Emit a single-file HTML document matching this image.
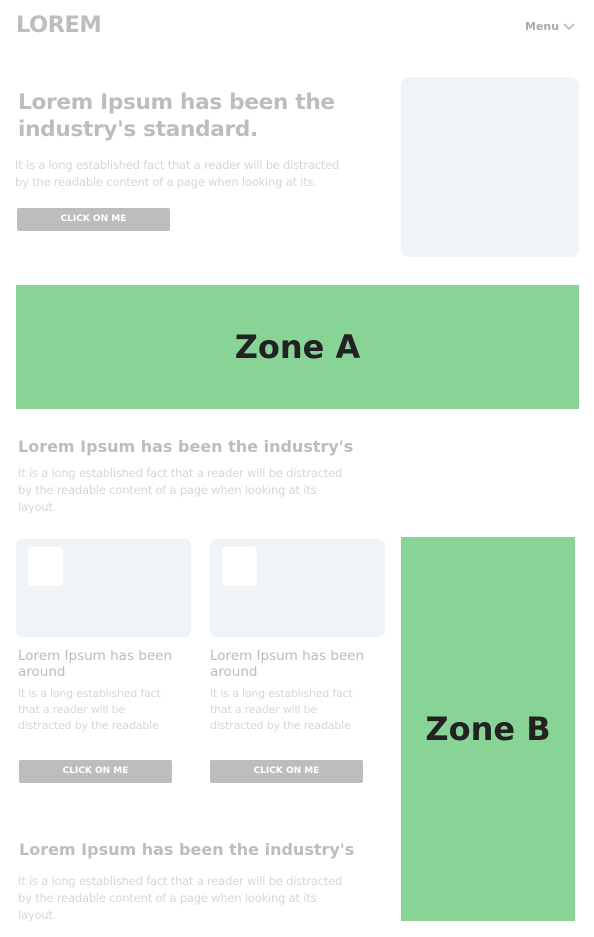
<!DOCTYPE html>
<html><head><style>
*{margin:0;padding:0;box-sizing:border-box}
body{width:594px;height:937px;background:#fff;font-family:"DejaVu Sans","Liberation Sans",sans-serif;position:relative;overflow:hidden}
.a{position:absolute}
.h{color:#bdbdbd;font-weight:bold}
.p{color:#d6d6d6;font-size:11.5px;line-height:17px;letter-spacing:-0.2px}
.btn{background:#bdbdbd;color:#fff;font-size:9px;font-weight:bold;text-align:center;border-radius:2px;height:23px;line-height:23px}
.box{background:#eff4f8;border-radius:6px}
.z{background:#88d396;color:#222;font-weight:bold;display:flex;align-items:center;justify-content:center;font-size:32px}
</style></head><body>
<div class="a h" style="left:16px;top:12px;font-size:22.5px;letter-spacing:-0.5px">LOREM</div>
<div class="a h" style="left:525px;top:20px;font-size:11px;color:#aaa">Menu</div>
<svg class="a" style="left:563px;top:23px" width="12" height="8"><path d="M1 1L6 6L11 1" stroke="#bbb" stroke-width="1.8" fill="none"/></svg>
<div class="a h" style="left:18px;top:89px;font-size:21.6px;line-height:27px;width:370px;letter-spacing:-0.3px">Lorem Ipsum has been the industry's standard.</div>
<div class="a p" style="left:15px;top:157px;width:340px">It is a long established fact that a reader will be distracted by the readable content of a page when looking at its.</div>
<div class="a btn" style="left:17px;top:208px;width:153px">CLICK ON ME</div>
<div class="a box" style="left:401px;top:77px;width:178px;height:180px;border-radius:9px"></div>
<div class="a z" style="left:16px;top:285px;width:563px;height:124px">Zone A</div>
<div class="a h" style="left:18px;top:437px;font-size:16px">Lorem Ipsum has been the industry's</div>
<div class="a p" style="left:18px;top:465px;width:328px">It is a long established fact that a reader will be distracted by the readable content of a page when looking at its layout.</div>
<div class="a box" style="left:16px;top:539px;width:175px;height:98px"></div>
<div class="a" style="left:28px;top:547px;width:35px;height:39px;background:#fff;border-radius:4px"></div>
<div class="a box" style="left:210px;top:539px;width:175px;height:98px"></div>
<div class="a" style="left:222px;top:547px;width:35px;height:39px;background:#fff;border-radius:4px"></div>
<div class="a" style="left:18px;top:648px;width:170px;color:#bbb;font-size:13.5px;line-height:16px">Lorem Ipsum has been around</div>
<div class="a p" style="left:18px;top:686px;width:160px;font-size:11px;line-height:16px">It is a long established fact that a reader will be distracted by the readable</div>
<div class="a" style="left:210px;top:648px;width:170px;color:#bbb;font-size:13.5px;line-height:16px">Lorem Ipsum has been around</div>
<div class="a p" style="left:210px;top:686px;width:160px;font-size:11px;line-height:16px">It is a long established fact that a reader will be distracted by the readable</div>
<div class="a btn" style="left:19px;top:760px;width:153px">CLICK ON ME</div>
<div class="a btn" style="left:210px;top:760px;width:153px">CLICK ON ME</div>
<div class="a z" style="left:401px;top:537px;width:174px;height:384px">Zone B</div>
<div class="a h" style="left:19px;top:840px;font-size:16px">Lorem Ipsum has been the industry's</div>
<div class="a p" style="left:18px;top:873px;width:328px">It is a long established fact that a reader will be distracted by the readable content of a page when looking at its layout.</div>
</body></html>
